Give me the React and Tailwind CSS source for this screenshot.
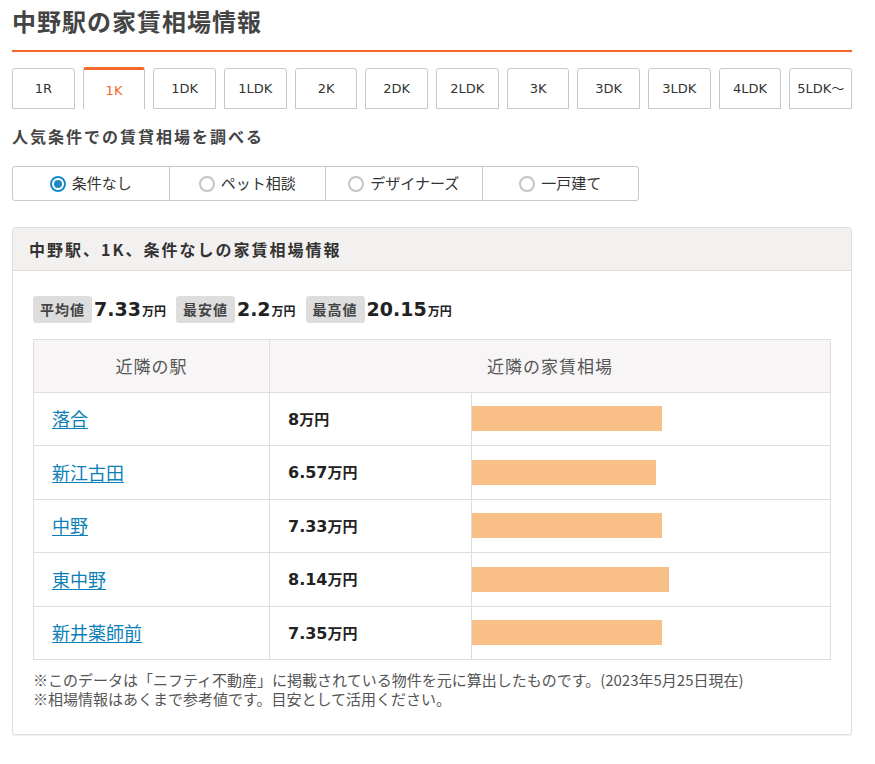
import React, { useState } from "react";

const TABS = ["1R", "1K", "1DK", "1LDK", "2K", "2DK", "2LDK", "3K", "3DK", "3LDK", "4LDK", "5LDK～"];
const OPTIONS = ["条件なし", "ペット相談", "デザイナーズ", "一戸建て"];
const ROWS = [
  { name: "落合", price: "8", bar: 190 },
  { name: "新江古田", price: "6.57", bar: 184 },
  { name: "中野", price: "7.33", bar: 190 },
  { name: "東中野", price: "8.14", bar: 197 },
  { name: "新井薬師前", price: "7.35", bar: 190 },
];
const STATS = [
  { label: "平均値", value: "7.33" },
  { label: "最安値", value: "2.2" },
  { label: "最高値", value: "20.15" },
];

const jp = { fontFamily: '"Noto Sans CJK JP", sans-serif' };
const latin = { fontFamily: '"DejaVu Sans", "Noto Sans CJK JP", sans-serif' };

export default function App() {
  const [tab, setTab] = useState(1);
  const [opt, setOpt] = useState(0);

  return (
    <div className="min-h-[764px] bg-white px-3 text-[#333]" style={jp}>
      <div className="w-[840px]">
        <h1 className="pt-[5px] text-[24px] leading-[32px] font-bold tracking-[1px] text-[#444]">中野駅の家賃相場情報</h1>
        <div className="mt-[13px] h-[2px] bg-[#f4682a]" />

        {/* tabs */}
        <div className="mt-[15px] flex gap-2">
          {TABS.map((t, i) =>
            i === tab ? (
              <button
                key={t}
                onClick={() => setTab(i)}
                className="flex h-[42px] flex-1 items-center justify-center rounded-t-[3px] border-x border-t-[3px] border-x-[#c8c8c8] border-t-[#f4682a] bg-white pt-[2px] text-[13px] text-[#f4682a]"
                style={latin}
              >
                {t}
              </button>
            ) : (
              <button
                key={t}
                onClick={() => setTab(i)}
                className="mt-px flex h-[41px] flex-1 items-center justify-center rounded-t-[3px] border border-[#c8c8c8] bg-white text-[13px] text-[#333]"
                style={latin}
              >
                {t}
              </button>
            )
          )}
        </div>

        <h2 className="mt-[15px] text-[16px] leading-[24px] font-bold tracking-[2px] text-[#444]">人気条件での賃貸相場を調べる</h2>

        {/* radio group */}
        <div className="mt-[18px] flex h-[35px] w-[627px] rounded-[3px] border border-[#c8c8c8]">
          {OPTIONS.map((o, i) => (
            <label
              key={o}
              onClick={() => setOpt(i)}
              className={`flex flex-1 cursor-pointer items-center justify-center gap-[6px] text-[15px] text-[#333] ${i > 0 ? "border-l border-[#c8c8c8]" : ""}`}
            >
              {i === opt ? (
                <span className="flex h-[16px] w-[16px] items-center justify-center rounded-full border-2 border-[#1a8cc4]">
                  <span className="h-[8px] w-[8px] rounded-full bg-[#1a8cc4]" />
                </span>
              ) : (
                <span className="h-[16px] w-[16px] rounded-full border-2 border-[#c4c4c4]" />
              )}
              {o}
            </label>
          ))}
        </div>

        {/* result panel */}
        <div className="mt-[26px] rounded-[3px] border border-[#e0dddb] shadow-[0_1px_1px_rgba(0,0,0,0.06)]">
          <div className="flex h-[43px] items-center border-b border-[#e0dddb] bg-[#f3f1f0] px-4 text-[16px] font-bold tracking-[2px] text-[#333]">
            中野駅、1K、条件なしの家賃相場情報
          </div>

          <div className="px-5 pt-[24px] pb-[26px]">
            <div className="flex items-center gap-[10px]">
              {STATS.map((s) => (
                <div key={s.label} className="flex items-center gap-[2px]">
                  <span className="flex h-[27px] items-center rounded-[3px] bg-[#dddddd] px-[7px] text-[14px] font-bold tracking-[1px] text-[#444]">
                    {s.label}
                  </span>
                  <span className="text-[19px] font-bold text-[#222]" style={latin}>
                    {s.value}
                    <span className="ml-px text-[12px]" style={jp}>万円</span>
                  </span>
                </div>
              ))}
            </div>

            <table className="mt-[15px] w-[798px] border-collapse text-left">
              <thead>
                <tr className="h-[53px] bg-[#f7f5f5] text-[17px] text-[#555]">
                  <th className="w-[236px] border border-[#e0dddb] text-center font-normal tracking-[1px]">近隣の駅</th>
                  <th colSpan={2} className="border border-[#e0dddb] text-center font-normal tracking-[1px]">近隣の家賃相場</th>
                </tr>
              </thead>
              <tbody>
                {ROWS.map((r) => (
                  <tr key={r.name} className="h-[53.5px]">
                    <td className="border border-[#e0dddb] pl-[18px] text-[18px]">
                      <a href="#" className="text-[#0b7fb8] underline underline-offset-2">{r.name}</a>
                    </td>
                    <td className="w-[202px] border border-[#e0dddb] pl-[18px] font-bold text-[#222]">
                      <span className="text-[16px]" style={latin}>{r.price}</span>
                      <span className="text-[15px]">万円</span>
                    </td>
                    <td className="border border-[#e0dddb] p-0">
                      <div className="h-[25px] bg-[#f8bf87]" style={{ width: r.bar }} />
                    </td>
                  </tr>
                ))}
              </tbody>
            </table>

            <div className="mt-[10px] text-[15px] leading-[19px] text-[#555]">
              <p>※このデータは「ニフティ不動産」に掲載されている物件を元に算出したものです。(2023年5月25日現在)</p>
              <p>※相場情報はあくまで参考値です。目安として活用ください。</p>
            </div>
          </div>
        </div>
      </div>
    </div>
  );
}
